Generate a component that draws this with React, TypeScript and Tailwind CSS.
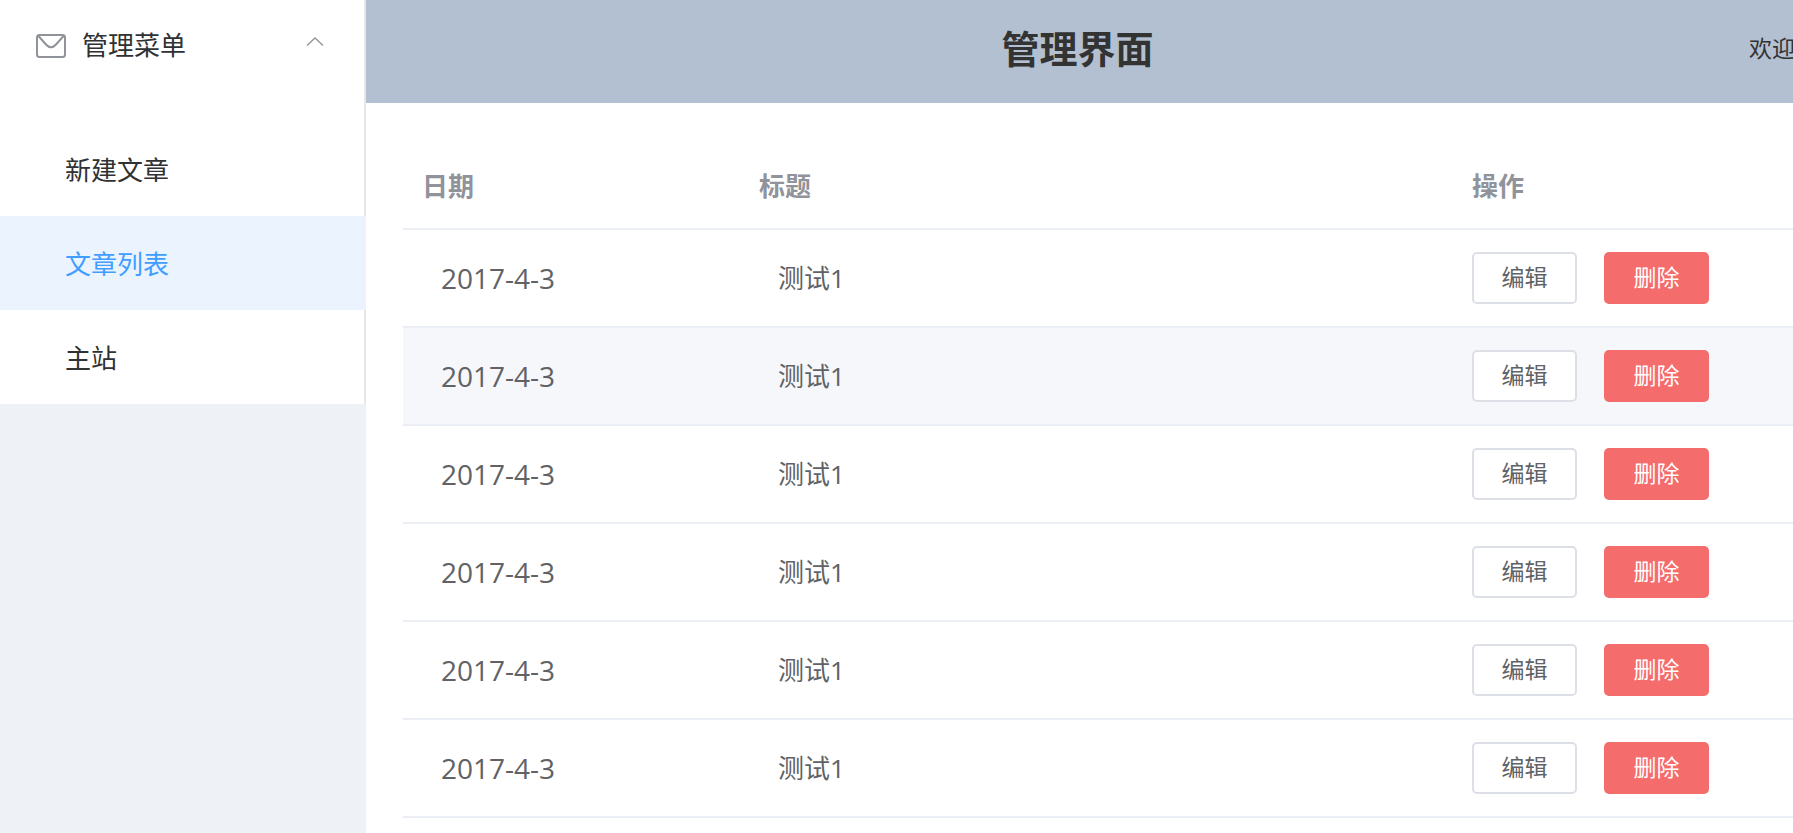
import { useState } from "react";
import clsx from "clsx";

type Article = {
  id: number;
  date: string;
  title: string;
};

const menuItems = ["新建文章", "文章列表", "主站"];

const articles: Article[] = Array.from({ length: 6 }, (_, i) => ({
  id: i + 1,
  date: "2017-4-3",
  title: "测试1",
}));

function MailIcon() {
  return (
    <svg
      className="mt-0.5 h-6 w-[30px] text-[#909399]"
      viewBox="0 0 30 24"
      fill="none"
      stroke="currentColor"
      strokeWidth="2"
    >
      <rect x="1" y="1" width="28" height="22" rx="2.5" />
      <path d="M2 1.5 10 10.5Q15 16 20 10.5L28 1.5" />
    </svg>
  );
}

function ArrowUpIcon() {
  return (
    <svg
      className="h-[9px] w-[18px] text-[#909399]"
      viewBox="0 0 18 9"
      fill="none"
      stroke="currentColor"
      strokeWidth="1.3"
    >
      <path d="M1 8.5 9 1 17 8.5" />
    </svg>
  );
}

function Sidebar() {
  const [active, setActive] = useState("文章列表");
  const [open, setOpen] = useState(true);

  return (
    <aside className="w-[366px] shrink-0 bg-[#eef1f6]">
      <nav className="border-r-2 border-[#e6e6e6] bg-white text-[26px] text-[#303133]">
        <button
          type="button"
          aria-expanded={open}
          onClick={() => setOpen(!open)}
          className="flex h-[90px] w-full items-center pr-10 pl-9"
        >
          <MailIcon />
          <span className="ml-4">管理菜单</span>
          <span className={clsx("mb-2 ml-auto", !open && "rotate-180")}>
            <ArrowUpIcon />
          </span>
        </button>
        {open && (
          <ul className="pt-8">
            {menuItems.map((item) => (
              <li key={item}>
                <a
                  href="#"
                  onClick={() => setActive(item)}
                  className={clsx(
                    "flex h-[94px] items-center pt-0.5 pl-[65px]",
                    item === active && "-mr-0.5 bg-[#ebf3ff] text-[#409eff]"
                  )}
                >
                  {item}
                </a>
              </li>
            ))}
          </ul>
        )}
      </nav>
    </aside>
  );
}

function ArticleTable() {
  const [current, setCurrent] = useState(2);

  return (
    <table className="w-full table-fixed border-separate border-spacing-0 text-left text-[26px] leading-9 text-[#606266]">
      <colgroup>
        <col className="w-[337px]" />
        <col />
        <col className="w-[340px]" />
      </colgroup>
      <thead>
        <tr className="text-[#909399]">
          <th className="h-[90px] border-b-2 border-[#ebeef5] px-[19px] pt-1">日期</th>
          <th className="border-b-2 border-[#ebeef5] px-[19px] pt-1">标题</th>
          <th className="border-b-2 border-[#ebeef5] px-[19px] pt-1">操作</th>
        </tr>
      </thead>
      <tbody>
        {articles.map((article) => (
          <tr
            key={article.id}
            onMouseEnter={() => setCurrent(article.id)}
            className={clsx(article.id === current && "bg-[#f5f7fa]")}
          >
            <td className="h-[98px] border-b-2 border-[#ebeef5] px-[38px] text-[28px]">
              {article.date}
            </td>
            <td className="border-b-2 border-[#ebeef5] px-[38px]">{article.title}</td>
            <td className="border-b-2 border-[#ebeef5] px-[19px]">
              <div className="flex gap-[27px] text-[23px] leading-6">
                <button
                  type="button"
                  className="h-[52px] w-[105px] rounded-[5px] border-2 border-[#dcdfe6] bg-white pb-0.5"
                >
                  编辑
                </button>
                <button
                  type="button"
                  className="h-[52px] w-[105px] rounded-[5px] bg-[#f56c6c] pb-0.5 text-white"
                >
                  删除
                </button>
              </div>
            </td>
          </tr>
        ))}
      </tbody>
    </table>
  );
}

export default function App() {
  return (
    <div className="flex h-screen overflow-hidden bg-white font-['Open_Sans','Noto_Sans_CJK_SC',sans-serif]">
      <Sidebar />
      <div className="flex min-w-0 flex-1 flex-col">
        <header className="grid h-[103px] shrink-0 grid-cols-[1fr_auto_1fr] items-center overflow-hidden bg-[#b3c0d1] pb-1.5 text-[#333]">
          <h1 className="col-start-2 pr-1 text-[38px] font-bold">管理界面</h1>
          <span className="w-11 justify-self-end text-[23px] whitespace-nowrap">欢迎</span>
        </header>
        <main className="min-h-0 flex-1 overflow-y-auto pt-[37px] pl-[37px] [scrollbar-width:none]">
          <ArticleTable />
        </main>
      </div>
    </div>
  );
}
